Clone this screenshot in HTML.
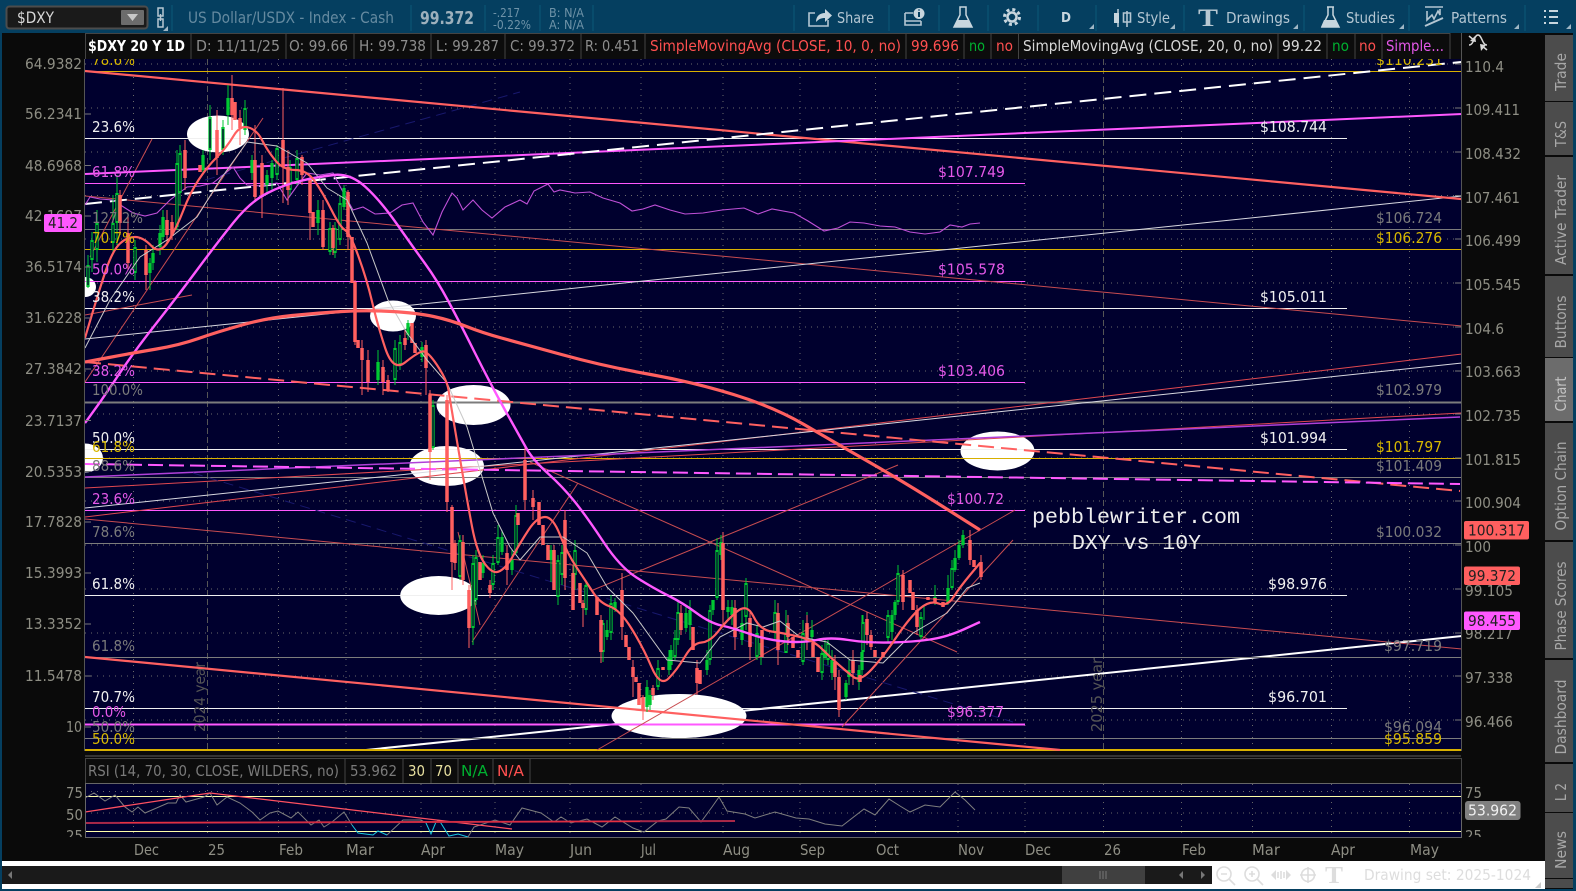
<!DOCTYPE html>
<html lang="en"><head><meta charset="utf-8"><title>$DXY chart</title>
<style>
html,body{margin:0;padding:0;background:#0a0a0a}
svg{display:block}
text{font-family:"DejaVu Sans","Liberation Sans",sans-serif;font-size:15px;fill:#8a8a8a}
.w{fill:#f0f0f0}.g{fill:#7a7a7a}.m{fill:#e458e8}.y{fill:#d8b800}.r{fill:#ff5050}.gn{fill:#00b030}
.a{fill:#8e8e84}.t{fill:#b4c6d2;font-size:15.5px}.s{fill:#a8a8a8}.h{fill:#8d8d8d}
.mono{font-family:"Liberation Mono",monospace;font-size:21px;fill:#eee}
.sep{stroke:#444;stroke-width:1}
.ts{stroke:#0a5070;stroke-width:1.5}
</style></head><body>
<svg xmlns="http://www.w3.org/2000/svg" width="1576" height="891" viewBox="0 0 1576 891">
<rect width="1576" height="891" fill="#053f60"/>
<rect x="2" y="33" width="1543" height="828" fill="#0a0a0a"/>
<rect x="1545" y="33" width="28" height="856" fill="#0a0a0a"/>
<rect x="2" y="861" width="1543" height="28" fill="#fff"/>
<!-- toolbar -->
<g fill="none">
<rect x="6.500" y="6.500" width="141" height="22" rx="3" fill="#1a1a1a" stroke="#4c4c4c" stroke-width="2"/>
<rect x="121" y="10" width="23" height="15" rx="1" fill="#6c6c6c"/><path d="M127 14h11l-5.500 7z" fill="#c8c8c8"/>
<path d="M158 8h5v8h-5zM158 19h5v8h-5z M160.500 14v7" stroke="#b8c8d2" stroke-width="1.500"/>
<path d="M163 31h5v-5z" fill="#9fb6c4"/>
</g>
<text x="17" y="23" textLength="37" lengthAdjust="spacingAndGlyphs" style="fill:#d8d8d8;font-size:16px">$DXY</text>
<text x="188" y="23" textLength="206" lengthAdjust="spacingAndGlyphs" style="fill:#658aa0;font-size:16px">US Dollar/USDX - Index - Cash</text>
<text x="420" y="24" textLength="54" lengthAdjust="spacingAndGlyphs" style="fill:#9db0bc;font-size:18px;font-weight:bold">99.372</text>
<text x="493" y="17" textLength="27" lengthAdjust="spacingAndGlyphs" style="fill:#6f93a8;font-size:12.500px">-.217</text>
<text x="493" y="29" textLength="38" lengthAdjust="spacingAndGlyphs" style="fill:#6f93a8;font-size:12.500px">-0.22%</text>
<text x="549" y="17" textLength="35" lengthAdjust="spacingAndGlyphs" style="fill:#6f93a8;font-size:12.500px">B: N/A</text>
<text x="549" y="29" textLength="35" lengthAdjust="spacingAndGlyphs" style="fill:#6f93a8;font-size:12.500px">A: N/A</text>
<path class="ts" d="M172 5V31M411 5V31M485 5V31M540 5V31M593 5V31M794 5V31M889 5V31M939 5V31M988 5V31M1038 5V31M1096 5V31M1184 5V31M1304 5V31M1409 5V31M1525 5V31" fill="none"/>
<g fill="none" stroke="#b4c6d2" stroke-width="1.600">
<path d="M815 13h-6v13h19v-6"/>
<path d="M905 13h8M905 13v12h16v-4M905 21h16"/>
<path d="M1127 11v16M1118 9v18"/>
<path d="M1123.500 13h7v9h-7z"/>
<path d="M1425 7h18M1427 11v9l5-5 2 4 4-8 2 4v-6"/>
<path d="M1425 26l18-8" stroke-width="2"/>
</g>
<path d="M816 22c0-6 4-9 9-9v-4l7 6.500-7 6.500v-4c-4 0-6 1-9 4z" fill="#c8d6de"/>
<circle cx="919" cy="13.500" r="5.500" fill="#c8d6de"/><path d="M919 12v5M919 9.500v1" stroke="#053f60" stroke-width="2"/>
<path id="fl" d="M960 7h6v8l6 12h-18l6-12z" fill="#053f60" stroke="#c8d6de" stroke-width="1.500"/>
<path d="M958 20h10l4 7h-18z" fill="#c8d6de"/>
<g fill="none" stroke="#c8d6de"><circle cx="1012" cy="17" r="7.500" stroke-width="3" stroke-dasharray="3 2.900"/><circle cx="1012" cy="17" r="4.500" stroke-width="2.500"/></g>
<text x="1061" y="22" textLength="10" lengthAdjust="spacingAndGlyphs" style="fill:#c8d6de;font-weight:bold;font-size:13px">D</text>
<rect x="1114" y="13" width="5" height="10" fill="#c8d6de"/>
<path d="M1328 7h7M1329 7v8l-6 12h17l-6-12V7" fill="#053f60" stroke="#c8d6de" stroke-width="1.500" transform="translate(-1 0)"/>
<path d="M1325 20h11l4 7h-18z" fill="#c8d6de" transform="translate(-1 0)"/>
<text x="1198" y="26" textLength="20" lengthAdjust="spacingAndGlyphs" style="font-family:'Liberation Serif',serif;font-weight:bold;font-size:25px;fill:#b8c8d2">T</text>
<path d="M1544 11h2M1544 17h2M1544 23h2M1549 11h9M1549 17h9M1549 23h9" stroke="#c8d6de" stroke-width="2"/>
<path d="M1089 29h5v-5zM1170 29h5v-5zM1293 29h5v-5zM1399 29h5v-5zM1514 29h5v-5zM1566 29h5v-5z" fill="#9fb6c4"/>
<text x="837" y="23" textLength="37" lengthAdjust="spacingAndGlyphs" class="t">Share</text>
<text x="1137" y="23" textLength="33" lengthAdjust="spacingAndGlyphs" class="t">Style</text>
<text x="1226" y="23" textLength="64" lengthAdjust="spacingAndGlyphs" class="t">Drawings</text>
<text x="1346" y="23" textLength="49" lengthAdjust="spacingAndGlyphs" class="t">Studies</text>
<text x="1451" y="23" textLength="56" lengthAdjust="spacingAndGlyphs" class="t">Patterns</text>
<!-- header row -->
<rect x="85" y="33" width="1376" height="26" fill="#0c0c0c"/>
<path class="sep" d="M85 33.500H1450M85.500 33V59M191 33V59M286 33V59M354 33V59M431 33V59M505 33V59M581 33V59M645 33V59M906 33V59M964 33V59M991 33V59M1018.500 33V59M1278 33V59M1327 33V59M1355 33V59M1382 33V59M1450 33V59" fill="none"/>
<g>
<text x="88" y="51" textLength="97" lengthAdjust="spacingAndGlyphs" style="fill:#fff;font-weight:bold">$DXY 20 Y 1D</text>
<text x="196" y="51" textLength="84" lengthAdjust="spacingAndGlyphs" class="h">D: 11/11/25</text>
<text x="289" y="51" textLength="59" lengthAdjust="spacingAndGlyphs" class="h">O: 99.66</text>
<text x="359" y="51" textLength="67" lengthAdjust="spacingAndGlyphs" class="h">H: 99.738</text>
<text x="436" y="51" textLength="63" lengthAdjust="spacingAndGlyphs" class="h">L: 99.287</text>
<text x="510" y="51" textLength="65" lengthAdjust="spacingAndGlyphs" class="h">C: 99.372</text>
<text x="585" y="51" textLength="54" lengthAdjust="spacingAndGlyphs" class="h">R: 0.451</text>
<text x="650" y="51" textLength="251" lengthAdjust="spacingAndGlyphs" class="r">SimpleMovingAvg (CLOSE, 10, 0, no)</text>
<text x="911" y="51" textLength="48" lengthAdjust="spacingAndGlyphs" class="r">99.696</text>
<text x="969" y="51" textLength="16" lengthAdjust="spacingAndGlyphs" class="gn">no</text>
<text x="996" y="51" textLength="17" lengthAdjust="spacingAndGlyphs" class="r">no</text>
<text x="1023" y="51" textLength="250" lengthAdjust="spacingAndGlyphs" style="fill:#d8d8d8">SimpleMovingAvg (CLOSE, 20, 0, no)</text>
<text x="1282" y="51" textLength="40" lengthAdjust="spacingAndGlyphs" style="fill:#d8d8d8">99.22</text>
<text x="1332" y="51" textLength="17" lengthAdjust="spacingAndGlyphs" class="gn">no</text>
<text x="1359" y="51" textLength="17" lengthAdjust="spacingAndGlyphs" class="r">no</text>
<text x="1386" y="51" textLength="58" lengthAdjust="spacingAndGlyphs" class="m">Simple...</text>
</g>
<!-- chart -->
<svg x="85" y="59" width="1377" height="692" viewBox="85 59 1377 692" overflow="hidden">
<rect x="85" y="59" width="1377" height="692" fill="#00002e"/>
<g fill="none" stroke="#6a6a6a">
<path stroke-dasharray="1 5" d="M85 64H1461M85 108H1461M85 152H1461M85 195.500H1461M85 239H1461M85 283H1461M85 327H1461M85 371H1461M85 414H1461M85 458H1461M85 501H1461M85 545H1461M85 589H1461M85 633H1461M85 676H1461M85 720H1461"/>
<path stroke-dasharray="1 5" d="M133.500 59V751M278.500 59V751M346 59V751M421 59V751M495 59V751M570 59V751M641 59V751M723 59V751M800 59V751M875.500 59V751M958 59V751M1025 59V751M1181.500 59V751M1252.500 59V751M1331.500 59V751M1409.500 59V751"/>
<path stroke="#565656" stroke-dasharray="6 3" d="M207.500 59V751M1103.500 59V751"/>
</g>
<!-- ovals -->
<g fill="#fff">
<ellipse cx="218" cy="134" rx="31" ry="18.500"/>
<ellipse cx="85" cy="287" rx="11" ry="10"/>
<ellipse cx="85" cy="458" rx="18" ry="14.500"/>
<ellipse cx="393" cy="316" rx="23" ry="15.500"/>
<ellipse cx="473.500" cy="405" rx="37" ry="20"/>
<ellipse cx="446.700" cy="466" rx="37.300" ry="20"/>
<ellipse cx="438.700" cy="595.500" rx="38.500" ry="19.500"/>
<ellipse cx="997.500" cy="451" rx="37" ry="19.500"/>
</g>
<path d="M366 750L1462 636" stroke="#fff" stroke-width="2"/>
<ellipse cx="679" cy="716" rx="67.500" ry="22" fill="#fff"/>
<!-- horizontal levels -->
<g fill="none" stroke-width="1">
<path stroke="#f0f0f0" d="M85 138.500H1347M85 308.500H1347M85 449.500H1347M85 595.500H1347M85 708.500H1347"/>
<path stroke="#ff58ff" d="M85 183.500H1025M85 281.500H1025M85 382.500H1025M85 510.500H1025"/>
<path stroke="#ff58ff" stroke-width="2" d="M85 724.500H1025"/>
<path stroke="#7c7c7c" d="M85 229.500H1461M85 477.500H1461M85 543.500H1461M85 657.500H1461M85 738.500H1461"/>
<path stroke="#7c7c7c" stroke-width="2" d="M85 402.500H1461"/>
<path stroke="#d8b000" d="M85 71.500H1461M85 249.500H1461M85 458.500H1461"/>
<path stroke="#d8b000" stroke-width="2" d="M85 750H1461"/>
</g>
<!-- trendlines -->
<g fill="none">
<path stroke="#c84c50" d="M85 196L1462 326M85 519L1462 649M90 257L152 139M85 382L263 118M85 315L192 295M472 642L578 483M597 750L1015 510M593 590L898 465M530 462L957 652M842 727L1013 540M458 532L480 625"/>
<path stroke="#e04850" d="M85 488L1461 413M85 517L1462 354"/>
<path stroke="#d8d8e0" d="M85 508L1462 363M85 339L1462 196"/>
<path stroke="#b040d8" stroke-width="1.500" d="M85 477L1460 417"/>
<path stroke="#18186e" stroke-dasharray="10 6" d="M193 473L1013 722M205 180L520 92"/>
<path stroke="#ff6060" stroke-width="2.200" d="M85 71L1461 199M85 657L1060 750"/>
<path stroke="#ff6060" stroke-width="2" stroke-dasharray="16 7" d="M85 362L1460 491"/>
<path stroke="#ff58ff" stroke-width="2" stroke-dasharray="15 6" d="M85 464L1460 484"/>
<path stroke="#ff58ff" stroke-width="2" d="M85 174L1462 114"/>
<path stroke="#fff" stroke-width="2" stroke-dasharray="17 8" d="M85 204L1461 62"/>
</g>
<!-- purple thin study -->
<path fill="none" stroke="#c050d8" stroke-width="1.100" d="M85 205L90 197L100 199L113 200L122 206L133 213L145 216L157 213L170 200L187 187L200 186L213 183L233 167L240 178L247 185L262 186L277 183L287 200L297 186L307 173L320 175L333 173L343 192L353 210L363 207L375 214L390 213L402 205L413 203L423 222L433 235L442 212L452 193L457 198L463 210L473 200L482 210L492 218L505 207L520 200L527 204L534 191L548 184L554 192L560 190L575 193L590 192L603 198L620 203L632 211L643 209L655 205L670 210L685 214L703 213L722 210L744 208L758 214L772 209L794 213L808 221L824 231L838 228L850 222L864 223L880 226L895 227L910 232L925 234L940 232L950 225L962 227L970 224L980 223"/>
<!-- candles green -->
<g fill="none" stroke="#00c832">
<path stroke-width="1" d="M88 255V288M92 232V272M97 210V262M113 195V255M117 175V245M135 240V280M150 258V290M153 245V270M160 225V255M163 210V240M177 150V230M180 145V205M203 150V175M210 105V160M223 120V155M228 85V125M245 100V135M252 155V180M267 170V195M272 160V190M277 145V180M290 160V195M297 150V185M318 200V235M330 222V255M335 222V258M340 195V245M344 185V210M378 350V385M395 340V385M400 335V370M408 320V340M422 342V362M433 400V450M460 535V580M473 555V645M476 550V605M483 555V578M493 555V590M498 525V565M502 530V555M512 550V575M516 505V555M551 545V582M558 555V605M562 545V585M575 540V590M586 580V615M603 620V662M607 620V640M611 595V640M615 598V612M647 680V712M650 690V710M658 660V690M669 650V675M671 645V670M675 630V660M678 600V645M686 605V632M690 600V640M707 650V675M710 605V665M713 600V615M717 538V600M721 535V560M728 600V620M732 600V625M742 610V645M746 578V630M757 625V660M761 640V665M775 600V640M786 610V650M803 620V665M807 612V640M812 620V640M822 645V680M825 640V660M828 640V665M832 650V680M846 680V700M849 660V685M859 665V690M862 615V675M863 615V655M888 610V642M892 610V640M895 600V620M898 565V605M921 612V640M924 605V620M935 585V605M948 575V605M952 560V590M955 550V572M959 540V560M963 530V548"/>
<path id="gb" stroke-width="3.300" d="M88 265V287M92 240V260M97 223V250M113 223V243M117 193V223M135 247V273M150 263V273M153 253V263M160 233V247M163 217V237M177 163V227M180 153V193M203 155V170M210 117V150M223 127V150M228 98V115M245 108V130M252 160V173M267 175V185M272 163V178M277 148V175M290 167V190M297 158V180M318 210V223M330 228V252M335 228V253M340 203V240M344 188V207M378 362V380M395 348V380M400 342V365M408 323V335M422 347V357M433 405V448M460 540V577M473 563V628M476 557V600M483 563V573M493 563V585M498 537V563M502 537V552M512 560V570M516 515V553M551 550V560M558 560V597M562 552V575M575 550V575M586 585V610M603 623V652M607 630V637M611 603V633M615 602V610M647 687V707M650 695V705M658 668V687M669 657V670M671 650V665M675 638V657M678 612V640M686 613V628M690 610V625M707 660V670M710 610V660M713 600V610M717 550V598M721 542V555M728 607V612M732 607V615M742 623V640M746 583V617M757 633V657M761 643V655M775 612V633M786 633V653M803 633V662M807 625V635M812 630V637M822 653V673M825 650V657M828 643V660M832 660V673M846 683V697M849 670V677M859 670V682M862 652V670M863 622V652M888 615V638M892 615V632M895 602V615M898 573V602M921 617V637M935 597V600M948 588V602M952 568V588M955 558V570M959 545V558M963 535V545"/>
<path stroke="#00002e" stroke-width="1.300" d="M88 267V285M92 242V258M97 225V248M113 225V241M117 195V221M135 249V271M177 165V225M180 155V191M210 119V148M223 129V148M245 110V128M277 150V173M290 169V188M297 160V178M330 230V250M335 230V251M340 205V238M395 350V378M400 344V363M433 407V446M460 542V575M473 565V626M476 559V598M493 565V583M498 539V561M516 517V551M558 562V595M562 554V573M575 552V573M586 587V608M603 625V650M611 605V631M658 670V685M675 640V655M678 614V638M710 612V658M717 552V596M746 585V615M757 635V655M775 614V631M786 635V651M803 635V660M822 655V671M828 645V658M863 624V650M888 617V636M898 575V600M921 619V635M952 570V586"/>
</g>
<!-- candles red -->
<g fill="none" stroke="#ff5f5f">
<path stroke-width="1" d="M120 190V235M128 215V270M146 245V290M167 210V242M172 215V240M185 140V190M217 110V175M232 75V130M240 110V145M255 125V200M262 155V218M283 88V203M288 150V205M302 155V185M310 175V240M323 200V250M333 225V255M348 190V250M355 280V345M362 340V395M368 350V392M383 360V395M388 375V392M405 330V350M426 340V395M430 390V480M447 395V512M452 505V590M455 540V570M463 535V585M469 585V648M490 580V598M507 545V585M525 445V510M533 490V520M554 545V590M565 510V590M573 565V610M583 600V627M601 615V663M622 573V640M633 660V697M643 695V720M653 685V700M681 605V635M697 660V695M723 532V625M735 600V650M750 610V660M778 603V665M788 615V645M807 615V650M835 655V690M839 670V717M853 650V685M867 612V645M871 630V650M903 570V610M917 605V635M970 530V565M981 555V580"/>
<path stroke-width="3.500" d="M120 195V223M128 233V263M146 250V275M167 220V235M172 222V236M185 150V178M200 165V172M217 130V158M232 98V115M235 102V120M240 118V128M255 160V197M262 163V197M283 140V167M288 167V190M302 157V175M310 180V213M313 212V227M323 210V247M333 228V248M348 192V237M352 237V283M355 282V342M358 340V348M362 348V360M368 360V382M383 367V382M388 380V390M405 338V345M412 323V343M415 343V353M426 345V368M430 395V452M447 400V502M452 507V562M455 543V563M463 542V580M469 590V628M480 562V580M490 585V593M507 553V570M518 513V525M525 460V500M533 498V507M539 502V525M543 525V545M548 545V560M554 550V590M565 520V578M573 573V610M580 583V603M583 603V608M597 597V615M601 620V652M622 590V627M626 635V647M629 647V660M633 667V677M636 677V682M639 683V705M643 697V710M653 688V695M663 667V670M681 613V630M693 627V650M697 668V683M700 670V684M723 543V610M735 608V637M750 618V647M762 630V657M778 613V650M788 623V637M793 637V648M798 650V658M807 623V642M813 643V657M818 657V672M835 662V677M839 677V710M853 660V673M860 675V682M867 619V635M871 635V647M875 650V657M883 652V657M903 575V602M910 580V593M913 592V610M917 610V627M928 597V600M935 598V603M943 602V607M970 540V560M974 560V567M981 562V577"/>
</g>
<!-- SMAs -->
<g fill="none" stroke-linejoin="round">
<path stroke="#c8c8c8" stroke-width="1" d="M85 348L110 300L140 257L167 240L197 217L220 180L247 142L277 146L307 163L327 188L347 200L367 243L388 300L407 333L427 360L447 383L467 427L493 513L510 547L520 560L540 537L563 537L587 553L607 587L633 613L667 660L700 663L720 637L747 623L763 627L780 621L800 637L827 642L850 660L883 663L913 633L947 613L967 588L980 583"/>
<path stroke="#ff58ff" stroke-width="2.400" d="M85 423Q102 400 117.500 376.500Q133 353 155 325Q177 297 197 270Q217 243 233.500 222.500Q250 202 266.500 193.500Q283 185 300 181Q317 177 333.500 175Q350 173 365 186.500Q380 200 396.500 223.500Q413 247 425 263.500Q437 280 448.500 301.500Q460 323 475 353Q490 383 505 410Q520 437 526.500 448.500Q533 460 548 473.500Q563 487 575 502Q587 517 603.500 542Q620 567 636.500 577.500Q653 588 668 595.500Q683 603 696.500 613Q710 623 721.500 625.500Q733 628 750 634Q767 640 785 641.500Q803 643 816.500 640Q830 637 848.500 640Q867 643 890 642.500Q913 642 930 639.500Q947 637 963.500 629.500L980 622"/>
<path stroke="#ff6060" stroke-width="2.200" d="M85 338Q100 287 106.500 268.500Q113 250 120 243.500Q127 237 135 237Q143 237 151.500 246Q160 255 168.500 241Q177 227 183.500 210Q190 193 198.500 180Q207 167 217 157Q227 147 233.500 136Q240 125 248.500 127.500Q257 130 262 140Q267 150 275 160Q283 170 295 170Q307 170 315 181.500Q323 193 331.500 210Q340 227 345 230Q350 233 358.500 256.500Q367 280 372 301.500Q377 323 385 347.500Q393 372 405 362.500Q417 353 422 351.500Q427 350 437 365Q447 380 448.500 390Q450 400 458.500 450Q467 500 472 526.500Q477 553 485 564Q493 575 500 571Q507 567 513.500 555Q520 543 528.500 530Q537 517 545 517Q553 517 560 535Q567 553 577 568Q587 583 593.500 593Q600 603 610 606.500Q620 610 631.500 628.500Q643 647 651.500 667Q660 687 668.500 678.500Q677 670 685 656.500Q693 643 701.500 642.500Q710 642 718.500 631Q727 620 737 611.500Q747 603 753.500 616.500Q760 630 771.500 631.500Q783 633 798 636.500Q813 640 821.500 648.500Q830 657 838.500 664.500Q847 672 853.500 677Q860 682 871.500 669.500Q883 657 896.500 637Q910 617 920 608.500Q930 600 938.500 603.500Q947 607 953.500 597Q960 587 970 575L980 563"/>
<path stroke="#ff6060" stroke-width="3.200" d="M85 362L109 357.500Q133 353 156.500 349Q180 345 198.500 338.500Q217 332 242 325Q267 318 292 315.500Q317 313 342 311.500Q367 310 392 311.500Q417 313 433.500 316.500Q450 320 466.500 326.500Q483 333 501.500 338Q520 343 561.500 354.500Q603 366 648 374Q693 382 733.500 394.500Q774 407 804 424.500Q834 442 869 462Q904 482 942 506L980 530"/>
</g>
<!-- labels left -->
<g>
<text x="92" y="65" textLength="43" lengthAdjust="spacingAndGlyphs" class="y">78.6%</text>
<text x="92" y="132" textLength="43" lengthAdjust="spacingAndGlyphs" class="w">23.6%</text>
<text x="92" y="177" textLength="43" lengthAdjust="spacingAndGlyphs" class="m">61.8%</text>
<text x="92" y="223" textLength="51" lengthAdjust="spacingAndGlyphs" class="g">127.2%</text>
<text x="92" y="243" textLength="43" lengthAdjust="spacingAndGlyphs" class="y">70.7%</text>
<text x="92" y="274.500" textLength="43" lengthAdjust="spacingAndGlyphs" class="m">50.0%</text>
<text x="92" y="302" textLength="43" lengthAdjust="spacingAndGlyphs" class="w">38.2%</text>
<text x="92" y="376" textLength="43" lengthAdjust="spacingAndGlyphs" class="m">38.2%</text>
<text x="92" y="395" textLength="51" lengthAdjust="spacingAndGlyphs" class="g">100.0%</text>
<text x="92" y="443" textLength="43" lengthAdjust="spacingAndGlyphs" class="w">50.0%</text>
<text x="92" y="452" textLength="43" lengthAdjust="spacingAndGlyphs" class="y">61.8%</text>
<text x="92" y="471" textLength="43" lengthAdjust="spacingAndGlyphs" class="g">88.6%</text>
<text x="92" y="504" textLength="43" lengthAdjust="spacingAndGlyphs" class="m">23.6%</text>
<text x="92" y="537" textLength="43" lengthAdjust="spacingAndGlyphs" class="g">78.6%</text>
<text x="92" y="589" textLength="43" lengthAdjust="spacingAndGlyphs" class="w">61.8%</text>
<text x="92" y="651" textLength="43" lengthAdjust="spacingAndGlyphs" class="g">61.8%</text>
<text x="92" y="702" textLength="43" lengthAdjust="spacingAndGlyphs" class="w">70.7%</text>
<text x="92" y="717" textLength="34" lengthAdjust="spacingAndGlyphs" class="m">0.0%</text>
<text x="92" y="732" textLength="43" lengthAdjust="spacingAndGlyphs" class="g">50.0%</text>
<text x="92" y="744" textLength="43" lengthAdjust="spacingAndGlyphs" class="y">50.0%</text>
<!-- labels right -->
<text x="1260" y="132" textLength="67" lengthAdjust="spacingAndGlyphs" class="w">$108.744</text>
<text x="938" y="177" textLength="67" lengthAdjust="spacingAndGlyphs" class="m">$107.749</text>
<text x="1376" y="65" textLength="67" lengthAdjust="spacingAndGlyphs" class="y">$110.231</text>
<text x="1376" y="223" textLength="66" lengthAdjust="spacingAndGlyphs" class="g">$106.724</text>
<text x="1376" y="243" textLength="66" lengthAdjust="spacingAndGlyphs" class="y">$106.276</text>
<text x="938" y="274.500" textLength="67" lengthAdjust="spacingAndGlyphs" class="m">$105.578</text>
<text x="1260" y="302" textLength="67" lengthAdjust="spacingAndGlyphs" class="w">$105.011</text>
<text x="938" y="376" textLength="67" lengthAdjust="spacingAndGlyphs" class="m">$103.406</text>
<text x="1376" y="395" textLength="66" lengthAdjust="spacingAndGlyphs" class="g">$102.979</text>
<text x="1260" y="443" textLength="67" lengthAdjust="spacingAndGlyphs" class="w">$101.994</text>
<text x="1376" y="452" textLength="66" lengthAdjust="spacingAndGlyphs" class="y">$101.797</text>
<text x="1376" y="471" textLength="66" lengthAdjust="spacingAndGlyphs" class="g">$101.409</text>
<text x="947" y="504" textLength="57" lengthAdjust="spacingAndGlyphs" class="m">$100.72</text>
<text x="1376" y="537" textLength="66" lengthAdjust="spacingAndGlyphs" class="g">$100.032</text>
<text x="1268" y="589" textLength="59" lengthAdjust="spacingAndGlyphs" class="w">$98.976</text>
<text x="1384" y="651" textLength="58" lengthAdjust="spacingAndGlyphs" class="g">$97.719</text>
<text x="1268" y="702" textLength="59" lengthAdjust="spacingAndGlyphs" class="w">$96.701</text>
<text x="947" y="717" textLength="57" lengthAdjust="spacingAndGlyphs" class="m">$96.377</text>
<text x="1384" y="732" textLength="58" lengthAdjust="spacingAndGlyphs" class="g">$96.094</text>
<text x="1384" y="744" textLength="58" lengthAdjust="spacingAndGlyphs" class="y">$95.859</text>
<text class="mono" x="1032" y="523" textLength="208" lengthAdjust="spacingAndGlyphs">pebblewriter.com</text>
<text class="mono" x="1072" y="549" textLength="129" lengthAdjust="spacingAndGlyphs">DXY vs 10Y</text>
<text transform="rotate(-90 205 697)" x="205" y="697" text-anchor="middle" textLength="70" lengthAdjust="spacingAndGlyphs" style="fill:#555">2024 year</text>
<text transform="rotate(-90 1102 695)" x="1102" y="695" text-anchor="middle" textLength="74" lengthAdjust="spacingAndGlyphs" style="fill:#555">2025 year</text>
</g>
<path stroke="#777" d="M85 114H91M85 165.500H91M85 216H91M85 267H91M85 318H91M85 369H91M85 420.500H91M85 471.500H91M85 522H91M85 573H91M85 624H91M85 676H91M85 727H91M1455 64H1461M1455 108H1461M1455 152H1461M1455 195.500H1461M1455 239H1461M1455 283H1461M1455 327H1461M1455 371H1461M1455 414H1461M1455 458H1461M1455 501H1461M1455 545H1461M1455 589H1461M1455 633H1461M1455 676H1461M1455 720H1461"/>
</svg>
<path d="M84.500 59V751M1461.500 33V751" stroke="#555" fill="none"/>
<!-- collapse icon (sits over the axis column, above the chart clip) -->
<g fill="none" stroke="#d8d8d8" stroke-width="1.500">
<path d="M1469 45c5 0 5-10 9-10s4 10 9 10"/>
<path d="M1469 36l6 5M1487 50l-6-5"/>
</g>
<path d="M1470 41l6 1-1-6zM1486 45l-6-1 1 7z" fill="#d8d8d8"/>
<!-- left axis -->
<g>
<text x="25" y="69" textLength="57" lengthAdjust="spacingAndGlyphs" class="a">64.9382</text>
<text x="25" y="119" textLength="57" lengthAdjust="spacingAndGlyphs" class="a">56.2341</text>
<text x="25" y="171" textLength="57" lengthAdjust="spacingAndGlyphs" class="a">48.6968</text>
<text x="25" y="221" textLength="57" lengthAdjust="spacingAndGlyphs" class="a">42.1697</text>
<text x="25" y="272" textLength="57" lengthAdjust="spacingAndGlyphs" class="a">36.5174</text>
<text x="25" y="323" textLength="57" lengthAdjust="spacingAndGlyphs" class="a">31.6228</text>
<text x="25" y="374" textLength="57" lengthAdjust="spacingAndGlyphs" class="a">27.3842</text>
<text x="25" y="426" textLength="57" lengthAdjust="spacingAndGlyphs" class="a">23.7137</text>
<text x="25" y="477" textLength="57" lengthAdjust="spacingAndGlyphs" class="a">20.5353</text>
<text x="25" y="527" textLength="57" lengthAdjust="spacingAndGlyphs" class="a">17.7828</text>
<text x="25" y="578" textLength="57" lengthAdjust="spacingAndGlyphs" class="a">15.3993</text>
<text x="25" y="629" textLength="57" lengthAdjust="spacingAndGlyphs" class="a">13.3352</text>
<text x="25" y="681" textLength="57" lengthAdjust="spacingAndGlyphs" class="a">11.5478</text>
<text x="66" y="732" textLength="16" lengthAdjust="spacingAndGlyphs" class="a">10</text>
</g>
<rect x="44" y="214" width="38" height="18" rx="2" fill="#ff58ff"/>
<text x="48" y="228" textLength="30" lengthAdjust="spacingAndGlyphs" style="fill:#222">41.2</text>
<!-- right axis -->
<g>
<text x="1465" y="72" textLength="39" lengthAdjust="spacingAndGlyphs" class="a">110.4</text>
<text x="1465" y="115" textLength="55" lengthAdjust="spacingAndGlyphs" class="a">109.411</text>
<text x="1465" y="159" textLength="56" lengthAdjust="spacingAndGlyphs" class="a">108.432</text>
<text x="1465" y="203" textLength="55" lengthAdjust="spacingAndGlyphs" class="a">107.461</text>
<text x="1465" y="246" textLength="56" lengthAdjust="spacingAndGlyphs" class="a">106.499</text>
<text x="1465" y="290" textLength="56" lengthAdjust="spacingAndGlyphs" class="a">105.545</text>
<text x="1465" y="334" textLength="39" lengthAdjust="spacingAndGlyphs" class="a">104.6</text>
<text x="1465" y="377" textLength="56" lengthAdjust="spacingAndGlyphs" class="a">103.663</text>
<text x="1465" y="421" textLength="56" lengthAdjust="spacingAndGlyphs" class="a">102.735</text>
<text x="1465" y="465" textLength="56" lengthAdjust="spacingAndGlyphs" class="a">101.815</text>
<text x="1465" y="508" textLength="56" lengthAdjust="spacingAndGlyphs" class="a">100.904</text>
<text x="1465" y="552" textLength="26" lengthAdjust="spacingAndGlyphs" class="a">100</text>
<text x="1465" y="596" textLength="48" lengthAdjust="spacingAndGlyphs" class="a">99.105</text>
<text x="1465" y="639" textLength="48" lengthAdjust="spacingAndGlyphs" class="a">98.217</text>
<text x="1465" y="683" textLength="48" lengthAdjust="spacingAndGlyphs" class="a">97.338</text>
<text x="1465" y="727" textLength="48" lengthAdjust="spacingAndGlyphs" class="a">96.466</text>
</g>
<rect x="1464" y="521" width="65" height="18.500" rx="2" fill="#ff5f5f"/>
<text x="1468" y="535.500" textLength="57" lengthAdjust="spacingAndGlyphs" style="fill:#222">100.317</text>
<rect x="1464" y="566.500" width="56" height="18.500" rx="2" fill="#ff5f5f"/>
<text x="1468" y="581" textLength="48" lengthAdjust="spacingAndGlyphs" style="fill:#222">99.372</text>
<rect x="1464" y="611.500" width="56" height="18.500" rx="2" fill="#ff58ff"/>
<text x="1468" y="626" textLength="48" lengthAdjust="spacingAndGlyphs" style="fill:#222">98.455</text>
<!-- RSI -->
<rect x="85" y="755" width="1376" height="2" fill="#333"/>
<rect x="85.500" y="758.500" width="1376" height="25" fill="#0c0c0c" stroke="#444"/>
<path class="sep" fill="none" d="M345 758V783M403 758V783M431 758V783M458 758V783M493 758V783M530 758V783"/>
<text x="88" y="776" textLength="251" lengthAdjust="spacingAndGlyphs" class="g">RSI (14, 70, 30, CLOSE, WILDERS, no)</text>
<text x="350" y="776" textLength="47" lengthAdjust="spacingAndGlyphs" class="g">53.962</text>
<text x="408" y="776" textLength="17" lengthAdjust="spacingAndGlyphs" style="fill:#e8e0a0">30</text>
<text x="435" y="776" textLength="17" lengthAdjust="spacingAndGlyphs" style="fill:#e8e0a0">70</text>
<text x="461" y="776" textLength="27" lengthAdjust="spacingAndGlyphs" class="gn">N/A</text>
<text x="497" y="776" textLength="27" lengthAdjust="spacingAndGlyphs" class="r">N/A</text>
<svg x="85" y="784" width="1376" height="53" viewBox="85 784 1376 53">
<rect x="85" y="784" width="1376" height="53" fill="#00002e"/>
<path fill="none" stroke="#666" stroke-dasharray="1 5" d="M85 791.500H1461M85 813H1461M133.500 784V837M207.500 784V837M278.500 784V837M346 784V837M421 784V837M495 784V837M570 784V837M641 784V837M723 784V837M800 784V837M875.500 784V837M958 784V837M1025 784V837M1103.500 784V837M1181.500 784V837M1252.500 784V837M1331.500 784V837M1409.500 784V837"/>
<path fill="none" stroke="#ffffa8" d="M85 796.500H1461M85 831.500H1461"/>
<path fill="none" stroke="#7e7e7e" d="M85 798L94 793L105 801L115 795L125 807L132 812L138 807L145 813L168 803L176 803L180 795L186 802L204 797L210 793L217 805L227 797L240 803L252 812L260 820L270 813L278 811L291 818L298 812L311 825L319 820L324 827L332 822L344 812L352 825M387 835L403 820L421 820L426 823M436 822L439 820M468 837L474 827L495 820L510 825L522 808L541 813L554 822L561 817L571 823L587 819L602 827L615 817L633 828L644 832L658 821L666 819L679 807L689 808L701 822L712 807L719 797L727 811L745 814L755 818L775 812L796 818L809 819L825 824L842 826L864 809L875 815L889 799L900 806L910 812L925 805L940 807L955 792L965 800L975 810"/>
<path fill="none" stroke="#18c8e0" d="M352 825L358 833L373 835L378 831L387 835M426 823L431 834L436 822M439 820L449 836L458 834L468 837"/>
<path fill="none" stroke="#ff5060" stroke-width="1.300" d="M85 812L210 793L512 829"/>
<path fill="none" stroke="#a82848" stroke-width="2" d="M85 823L735 821"/>
<path fill="none" stroke="#e83040" d="M120 822.500L640 821.500"/>
</svg>
<rect x="85.500" y="783.500" width="1376" height="54" fill="none" stroke="#666"/>
<text x="66" y="798" textLength="17" lengthAdjust="spacingAndGlyphs" class="a">75</text>
<text x="66" y="820" textLength="17" lengthAdjust="spacingAndGlyphs" class="a">50</text>
<svg x="60" y="828" width="30" height="9" viewBox="60 828 30 9"><text x="66" y="841" textLength="17" lengthAdjust="spacingAndGlyphs" class="a">25</text></svg>
<text x="1465" y="798" textLength="17" lengthAdjust="spacingAndGlyphs" class="a">75</text>
<svg x="1460" y="828" width="30" height="9" viewBox="1460 828 30 9"><text x="1465" y="841" textLength="17" lengthAdjust="spacingAndGlyphs" class="a">25</text></svg>
<rect x="1465" y="801" width="55.500" height="19" rx="3" fill="#808080"/>
<text x="1468" y="815.500" textLength="49" lengthAdjust="spacingAndGlyphs" style="fill:#f0f0f0">53.962</text>
<!-- dates -->
<g>
<text x="134" y="855" textLength="25" lengthAdjust="spacingAndGlyphs" class="a">Dec</text>
<text x="208" y="855" textLength="17" lengthAdjust="spacingAndGlyphs" class="a">25</text>
<text x="279" y="855" textLength="24" lengthAdjust="spacingAndGlyphs" class="a">Feb</text>
<text x="346" y="855" textLength="28" lengthAdjust="spacingAndGlyphs" class="a">Mar</text>
<text x="421" y="855" textLength="24" lengthAdjust="spacingAndGlyphs" class="a">Apr</text>
<text x="495" y="855" textLength="29" lengthAdjust="spacingAndGlyphs" class="a">May</text>
<text x="570" y="855" textLength="22" lengthAdjust="spacingAndGlyphs" class="a">Jun</text>
<text x="641" y="855" textLength="15" lengthAdjust="spacingAndGlyphs" class="a">Jul</text>
<text x="723" y="855" textLength="27" lengthAdjust="spacingAndGlyphs" class="a">Aug</text>
<text x="800" y="855" textLength="25" lengthAdjust="spacingAndGlyphs" class="a">Sep</text>
<text x="876" y="855" textLength="23" lengthAdjust="spacingAndGlyphs" class="a">Oct</text>
<text x="958" y="855" textLength="26" lengthAdjust="spacingAndGlyphs" class="a">Nov</text>
<text x="1025" y="855" textLength="26" lengthAdjust="spacingAndGlyphs" class="a">Dec</text>
<text x="1104" y="855" textLength="17" lengthAdjust="spacingAndGlyphs" class="a">26</text>
<text x="1182" y="855" textLength="24" lengthAdjust="spacingAndGlyphs" class="a">Feb</text>
<text x="1252" y="855" textLength="28" lengthAdjust="spacingAndGlyphs" class="a">Mar</text>
<text x="1331" y="855" textLength="24" lengthAdjust="spacingAndGlyphs" class="a">Apr</text>
<text x="1410" y="855" textLength="29" lengthAdjust="spacingAndGlyphs" class="a">May</text>
</g>
<!-- scrollbar -->
<rect x="2" y="866" width="1210" height="18" fill="#1a1a1a"/>
<rect x="1062" y="866" width="83" height="18" fill="#404040"/>
<path d="M1100 871v8M1103 871v8M1106 871v8" stroke="#777"/>
<path d="M12 871v8l-4-4zM1183 871v8l-4-4zM1201 871v8l4-4z" fill="#777"/>
<g fill="none" stroke="#ddd" stroke-width="1.600">
<circle cx="1224" cy="874" r="7"/><path d="M1229 879l6 6M1221 874h6"/>
<circle cx="1252" cy="874" r="7"/><path d="M1257 879l6 6M1249 874h6M1252 871v6"/>
<circle cx="1308" cy="875" r="6.500"/><path d="M1300 875h16M1308 867v16"/>
<path d="M1278 872v6M1281 871v8M1284 872v6"/>
</g>
<path d="M1271 875l5-5v10zM1291 875l-5-5v10z" fill="#ddd"/>
<text x="1325" y="883" textLength="18" lengthAdjust="spacingAndGlyphs" style="font-family:'Liberation Serif',serif;font-weight:bold;font-size:24px;fill:#ddd">T</text>
<text x="1364" y="880" textLength="167" lengthAdjust="spacingAndGlyphs" style="fill:#ddd">Drawing set: 2025-1024</text>
<path d="M1535 888h6v-6z" fill="#ccc"/>
<!-- side tabs -->
<g fill="#4c4c4c">
<rect x="1545" y="35" width="28" height="66"/>
<rect x="1545" y="102" width="28" height="53"/>
<rect x="1545" y="157" width="28" height="117"/>
<rect x="1545" y="276" width="28" height="81"/>
<rect x="1545" y="358" width="28" height="63" fill="#6c6c6c"/>
<rect x="1545" y="423" width="28" height="117"/>
<rect x="1545" y="542" width="28" height="116"/>
<rect x="1545" y="660" width="28" height="102"/>
<rect x="1545" y="764" width="28" height="48"/>
<rect x="1545" y="813" width="28" height="65"/>
<rect x="1545" y="879" width="28" height="9"/>
</g>
<g>
<text transform="rotate(-90 1566 72)" x="1566" y="72" text-anchor="middle" textLength="38" lengthAdjust="spacingAndGlyphs" class="s">Trade</text>
<text transform="rotate(-90 1566 134)" x="1566" y="134" text-anchor="middle" textLength="26" lengthAdjust="spacingAndGlyphs" class="s">T&amp;S</text>
<text transform="rotate(-90 1566 220)" x="1566" y="220" text-anchor="middle" textLength="90" lengthAdjust="spacingAndGlyphs" class="s">Active Trader</text>
<text transform="rotate(-90 1566 322)" x="1566" y="322" text-anchor="middle" textLength="53" lengthAdjust="spacingAndGlyphs" class="s">Buttons</text>
<text transform="rotate(-90 1566 394)" x="1566" y="394" text-anchor="middle" textLength="35" lengthAdjust="spacingAndGlyphs" style="fill:#c4c4c4">Chart</text>
<text transform="rotate(-90 1566 486)" x="1566" y="486" text-anchor="middle" textLength="89" lengthAdjust="spacingAndGlyphs" class="s">Option Chain</text>
<text transform="rotate(-90 1566 606)" x="1566" y="606" text-anchor="middle" textLength="89" lengthAdjust="spacingAndGlyphs" class="s">Phase Scores</text>
<text transform="rotate(-90 1566 717)" x="1566" y="717" text-anchor="middle" textLength="75" lengthAdjust="spacingAndGlyphs" class="s">Dashboard</text>
<text transform="rotate(-90 1566 792)" x="1566" y="792" text-anchor="middle" textLength="18" lengthAdjust="spacingAndGlyphs" class="s">L 2</text>
<text transform="rotate(-90 1566 850)" x="1566" y="850" text-anchor="middle" textLength="38" lengthAdjust="spacingAndGlyphs" class="s">News</text>
</g>
</svg>
</body></html>
